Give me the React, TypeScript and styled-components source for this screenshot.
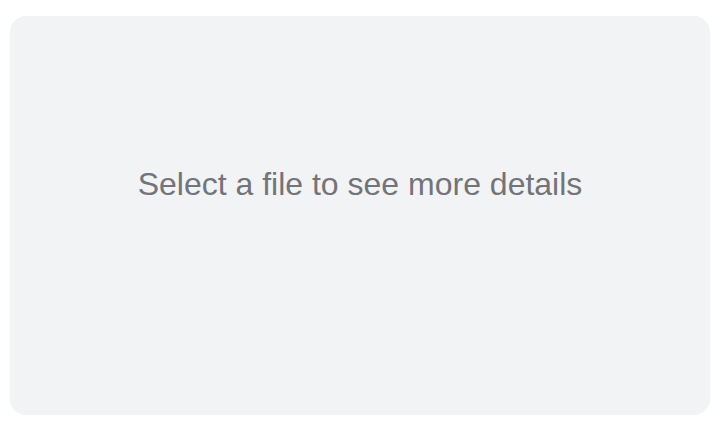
import React from 'react';
import styled, { createGlobalStyle } from 'styled-components';

const GlobalStyle = createGlobalStyle`
  html, body {
    margin: 0;
    padding: 0;
    background: #ffffff;
  }
  body {
    font-family: 'Liberation Sans', Arial, Helvetica, sans-serif;
  }
`;

const Page = styled.div`
  width: 724px;
  height: 430px;
  box-sizing: border-box;
  padding: 16px 14px 15px 10px;
`;

const EmptyPanel = styled.div`
  height: 399px;
  box-sizing: border-box;
  padding-bottom: 62px;
  border-radius: 16px;
  background: #f2f3f5;
  display: flex;
  align-items: center;
  justify-content: center;
`;

const Message = styled.p`
  margin: 0;
  font-size: 32px;
  color: #737479;
  letter-spacing: 0;
`;

function App(): JSX.Element {
  return (
    <>
      <GlobalStyle />
      <Page>
        <EmptyPanel>
          <Message>Select a file to see more details</Message>
        </EmptyPanel>
      </Page>
    </>
  );
}

export default App;
